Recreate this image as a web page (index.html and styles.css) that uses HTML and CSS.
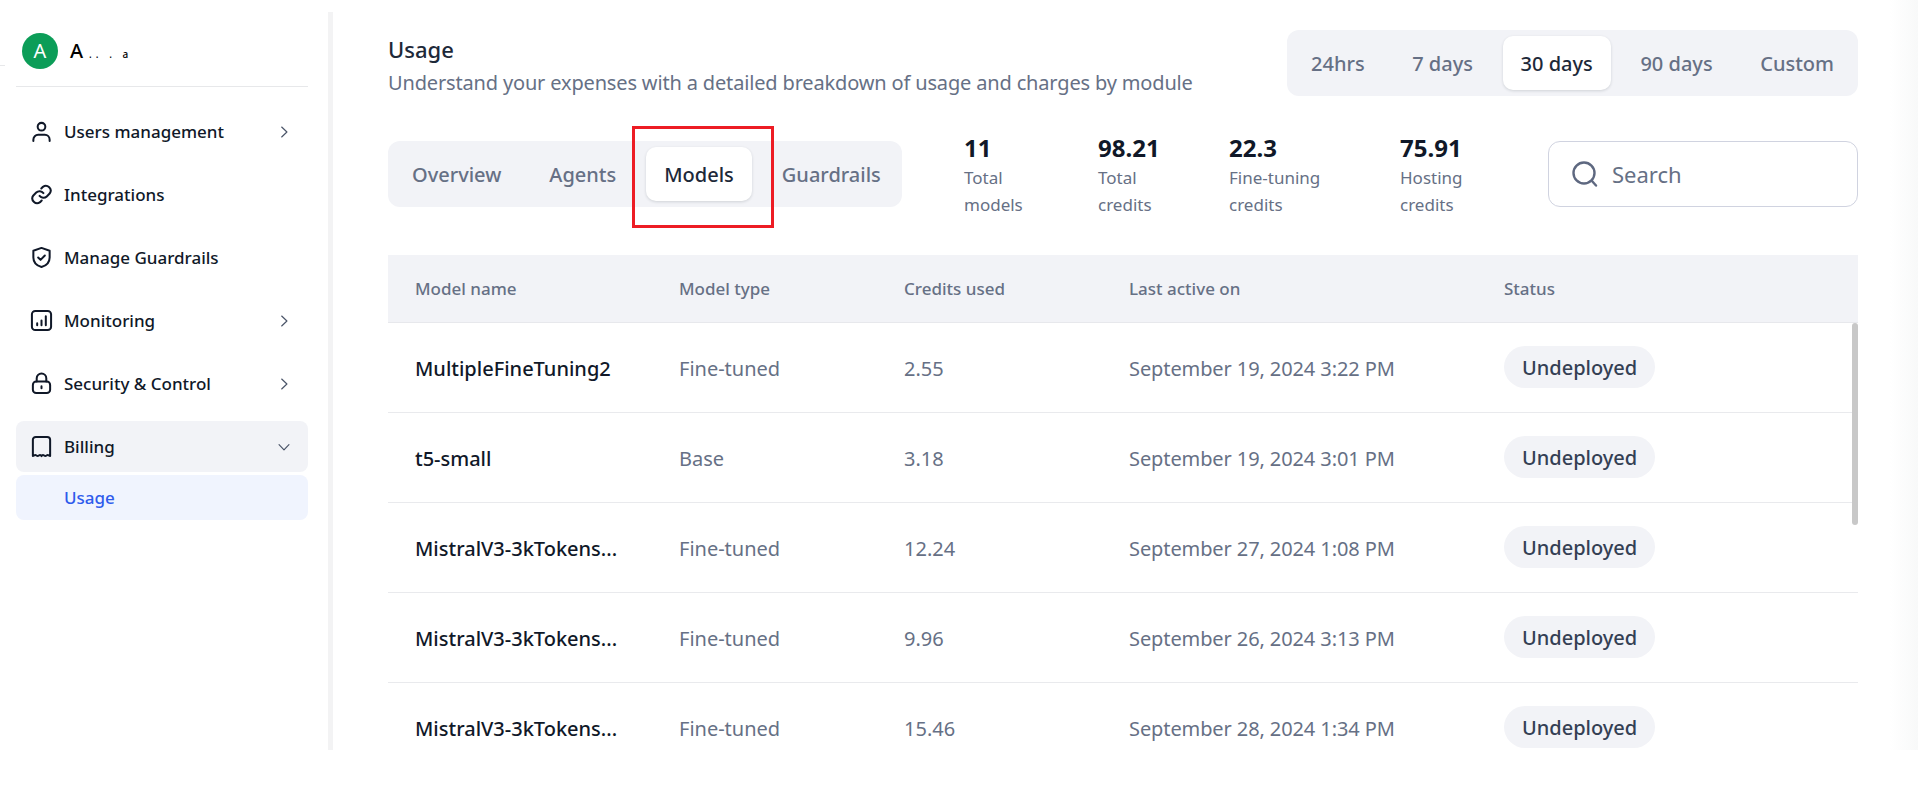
FILE: index.html
```html
<!DOCTYPE html>
<html>
<head>
    <meta charset="utf-8">
    <title>Usage</title>
    <link rel="stylesheet" href="styles.css">
</head>
<body>

<div class="app">

    <div class="sidebar">
        <div class="account">
            <span class="avatar">A</span>
            <span class="account-name">A<span class="account-rest">.. . a</span></span>
        </div>

        <div class="nav">
            <div class="nav-item">
                <svg class="nav-icon" viewBox="0 0 24 24"><circle cx="12" cy="7" r="4"/><path d="M3.500 22v-1.500a5 5 0 0 1 5-5h7a5 5 0 0 1 5 5V22"/></svg>
                <span class="nav-label">Users management</span>
                <svg class="chevron" viewBox="0 0 24 24"><path d="M8 3.500 17 12l-9 8.500"/></svg>
            </div>
            <div class="nav-item">
                <svg class="nav-icon" viewBox="0 0 24 24"><path d="M10 13.500a5 5 0 0 0 7.500.5l3-3a5 5 0 0 0-7-7l-1.700 1.700"/><path d="M14 10.500a5 5 0 0 0-7.500-.5l-3 3a5 5 0 0 0 7 7l1.700-1.700"/></svg>
                <span class="nav-label">Integrations</span>
            </div>
            <div class="nav-item">
                <svg class="nav-icon" viewBox="0 0 24 24"><path d="M12 2 3.500 5v7c0 5 3.500 8.500 8.500 10 5-1.500 8.500-5 8.500-10V5z"/><path d="m8.500 12 2.500 2.500 4.500-4.500"/></svg>
                <span class="nav-label">Manage Guardrails</span>
            </div>
            <div class="nav-item">
                <svg class="nav-icon" viewBox="0 0 24 24"><rect x="2" y="2" width="20" height="20" rx="3.500"/><path d="M7.500 17v-2M12 17v-5M16.500 17V7.500"/></svg>
                <span class="nav-label">Monitoring</span>
                <svg class="chevron" viewBox="0 0 24 24"><path d="M8 3.500 17 12l-9 8.500"/></svg>
            </div>
            <div class="nav-item">
                <svg class="nav-icon" viewBox="0 0 24 24"><rect x="3" y="10" width="18" height="12" rx="3.500"/><path d="M7 10V6.500a5 5 0 0 1 10 0V10M12 15v2"/></svg>
                <span class="nav-label">Security &amp; Control</span>
                <svg class="chevron" viewBox="0 0 24 24"><path d="M8 3.500 17 12l-9 8.500"/></svg>
            </div>
            <div class="nav-item nav-open">
                <svg class="nav-icon" viewBox="0 0 24 24"><path d="M3 22V5a3 3 0 0 1 3-3h12a3 3 0 0 1 3 3v17c-1 0-1.500-1.200-2.500-1.200S17 22 16 22s-1.500-1.200-2.500-1.200S12 22 12 22s-.5-1.200-1.500-1.200S9 22 8 22s-1.500-1.200-2.500-1.200S4 22 3 22z"/></svg>
                <span class="nav-label">Billing</span>
                <svg class="chevron" viewBox="0 0 24 24"><path d="M3.500 8 12 17l8.500-9"/></svg>
            </div>
            <div class="nav-sub">Usage</div>
        </div>
    </div>

    <div class="main">

        <div class="top-row">
            <div>
                <h1>Usage</h1>
                <p class="subtitle">Understand your expenses with a detailed breakdown of usage and charges by module</p>
            </div>
            <div class="tabs range-tabs">
                <span class="tab">24hrs</span>
                <span class="tab">7 days</span>
                <span class="tab tab-active">30 days</span>
                <span class="tab">90 days</span>
                <span class="tab">Custom</span>
            </div>
        </div>

        <div class="tool-row">
            <div class="tabs module-tabs">
                <span class="tab">Overview</span>
                <span class="tab">Agents</span>
                <span class="tab tab-active">Models</span>
                <span class="tab">Guardrails</span>
                <span class="red-box"></span>
            </div>

            <div class="stats">
                <div class="stat stat-models"><b>11</b><span>Total<br>models</span></div>
                <div class="stat stat-credits"><b>98.21</b><span>Total<br>credits</span></div>
                <div class="stat stat-tuning"><b>22.3</b><span>Fine-tuning<br>credits</span></div>
                <div class="stat"><b>75.91</b><span>Hosting<br>credits</span></div>
            </div>

            <div class="search">
                <svg class="search-icon" viewBox="0 0 26 26"><circle cx="12" cy="12" r="10.500"/><path d="m20 20 4 4.500"/></svg>
                <span>Search</span>
            </div>
        </div>

        <div class="table-box">
            <table class="models">
                <thead>
                    <tr>
                        <th class="col-name">Model name</th>
                        <th class="col-type">Model type</th>
                        <th class="col-credits">Credits used</th>
                        <th class="col-active">Last active on</th>
                        <th>Status</th>
                    </tr>
                </thead>
                <tbody>
                    <tr>
                        <td class="name">MultipleFineTuning2</td>
                        <td>Fine-tuned</td>
                        <td>2.55</td>
                        <td class="when">September 19, 2024 3:22 PM</td>
                        <td><span class="badge">Undeployed</span></td>
                    </tr>
                    <tr>
                        <td class="name">t5-small</td>
                        <td>Base</td>
                        <td>3.18</td>
                        <td class="when">September 19, 2024 3:01 PM</td>
                        <td><span class="badge">Undeployed</span></td>
                    </tr>
                    <tr>
                        <td class="name">MistralV3-3kTokens...</td>
                        <td>Fine-tuned</td>
                        <td>12.24</td>
                        <td class="when">September 27, 2024 1:08 PM</td>
                        <td><span class="badge">Undeployed</span></td>
                    </tr>
                    <tr>
                        <td class="name">MistralV3-3kTokens...</td>
                        <td>Fine-tuned</td>
                        <td>9.96</td>
                        <td class="when">September 26, 2024 3:13 PM</td>
                        <td><span class="badge">Undeployed</span></td>
                    </tr>
                    <tr>
                        <td class="name">MistralV3-3kTokens...</td>
                        <td>Fine-tuned</td>
                        <td>15.46</td>
                        <td class="when">September 28, 2024 1:34 PM</td>
                        <td><span class="badge">Undeployed</span></td>
                    </tr>
                </tbody>
            </table>
            <div class="scroll-thumb"></div>
        </div>

    </div>

    <div class="edge"></div>

</div>

</body>
</html>
```

FILE: styles.css
```css
* {
    box-sizing: border-box;
}

html, body {
    margin: 0;
    height: 798px;
    overflow: hidden;
    background: #fff;
}

body {
    font-family: "Noto Sans", "Open Sans", sans-serif;
    color: #101828;
}

.app {
    position: relative;
    display: flex;
    height: 750px;
    overflow: hidden;
}

/* sidebar */

.sidebar {
    width: 333px;
    flex: none;
    margin-top: 12px;
    padding: 0 20px 0 16px;
    border-right: 5px solid #f3f3f4;
}

.account {
    display: flex;
    align-items: center;
    gap: 12px;
    height: 75px;
    padding: 3px 0 0 6px;
    border-bottom: 1px solid #e7e8ea;
}

/* leftover bit of a line at the window edge */
.account::before {
    content: "";
    position: absolute;
    left: 0;
    top: 65px;
    width: 5px;
    height: 1px;
    background: #e7e8ea;
}

.avatar {
    width: 36px;
    height: 36px;
    border-radius: 50%;
    background: #0c9d58;
    color: #fff;
    font-size: 20px;
    line-height: 36px;
    text-align: center;
}

.account-name {
    font-size: 20px;
    font-weight: 500;
    color: #000;
}

.account-rest {
    font-size: 10px;
    letter-spacing: 4px;
    margin-left: 6px;
}

.nav {
    padding-top: 13px;
}

.nav-item {
    display: flex;
    align-items: center;
    height: 63px;
    padding: 0 16px 0 14px;
}

.nav-open {
    height: 51px;
    margin-top: 6px;
    background: #f2f3f7;
    border-radius: 8px;
}

.nav-icon {
    width: 23px;
    height: 23px;
    flex: none;
    fill: none;
    stroke: #101828;
    stroke-width: 2.1;
    stroke-linecap: round;
    stroke-linejoin: round;
}

.nav-label {
    flex: 1;
    margin-left: 11px;
    font-size: 17px;
    font-weight: 500;
    color: #101828;
}

.chevron {
    width: 14px;
    height: 14px;
    flex: none;
    margin-right: 1px;
    fill: none;
    stroke: #4a5468;
    stroke-width: 2;
    stroke-linecap: round;
    stroke-linejoin: round;
}

.nav-sub {
    height: 45px;
    margin-top: 3px;
    padding-left: 48px;
    background: #f0f4fe;
    border-radius: 8px;
    font-size: 17px;
    font-weight: 500;
    line-height: 45px;
    color: #2e5bec;
}

/* main column */

.main {
    width: 1470px;
    flex: none;
    margin-left: 55px;
}

.top-row {
    display: flex;
    justify-content: space-between;
    align-items: flex-start;
    height: 141px;
    padding-top: 30px;
}

h1 {
    margin: 4px 0 0;
    font-size: 22px;
    font-weight: 500;
    line-height: 30px;
    color: #1d2939;
}

.subtitle {
    margin: 6px 0 0;
    font-size: 20px;
    line-height: 26px;
    letter-spacing: -0.16px;
    color: #667085;
}

.tabs {
    display: flex;
    align-items: center;
    height: 66px;
    padding: 0 6px;
    background: #f2f3f7;
    border-radius: 12px;
}

.tab {
    height: 54px;
    padding: 0 18px;
    font-size: 20px;
    font-weight: 500;
    line-height: 56px;
    color: #667085;
}

.tab-active {
    background: #fff;
    border-radius: 10px;
    box-shadow: 0 1px 3px rgba(16, 24, 40, 0.15);
    color: #1d2939;
}

.range-tabs {
    width: 571px;
    justify-content: space-between;
}

.module-tabs {
    position: relative;
    width: 514px;
    flex: none;
    gap: 12px;
}

.red-box {
    position: absolute;
    left: 244px;
    top: -15px;
    width: 142px;
    height: 102px;
    border: 3px solid #ed1c24;
}

.tool-row {
    display: flex;
    align-items: flex-start;
    height: 114px;
}

.stats {
    display: flex;
    margin: -8px 0 0 62px;
}

.stat {
    font-size: 17px;
    line-height: 27px;
    color: #667085;
}

.stat b {
    display: block;
    font-size: 24px;
    font-weight: 700;
    line-height: 30px;
    color: #101828;
    margin-bottom: 1px;
}

.stat span {
    display: block;
}

.stat-models {
    width: 134px;
}

.stat-credits {
    width: 131px;
}

.stat-tuning {
    width: 171px;
}

.search {
    display: flex;
    align-items: center;
    gap: 14px;
    width: 310px;
    height: 66px;
    margin-left: auto;
    padding-left: 23px;
    border: 1px solid #d0d3e0;
    border-radius: 12px;
    font-size: 22px;
    color: #667085;
}

.search-icon {
    width: 26px;
    height: 26px;
    fill: none;
    stroke: #5e6880;
    stroke-width: 2.400;
    stroke-linecap: round;
}

/* table */

.table-box {
    position: relative;
    height: 495px;
    overflow: hidden;
}

.models {
    width: 100%;
    border-collapse: collapse;
    table-layout: fixed;
}

.models th {
    height: 67px;
    padding: 0;
    background: #f2f3f7;
    border-bottom: 1px solid #e7e8ec;
    font-size: 17px;
    font-weight: 500;
    text-align: left;
    color: #667085;
}

.models th:first-child, .models td:first-child {
    padding-left: 27px;
}

.col-name {
    width: 291px;
}

.col-type {
    width: 225px;
}

.col-credits {
    width: 225px;
}

.col-active {
    width: 375px;
}

.models td {
    height: 90px;
    padding: 2px 0 0;
    border-bottom: 1px solid #e9eaed;
    font-size: 20px;
    color: #667085;
}

.models td.name {
    font-weight: 500;
    color: #101828;
}

.models td.when {
    letter-spacing: -0.1px;
}

.badge {
    display: inline-block;
    height: 42px;
    margin-top: -2px;
    padding: 0 18px;
    background: #f2f3f7;
    border-radius: 21px;
    font-size: 20px;
    font-weight: 500;
    line-height: 44px;
    color: #344054;
    vertical-align: middle;
}

.scroll-thumb {
    position: absolute;
    right: 0;
    top: 68px;
    width: 6px;
    height: 202px;
    background: #c8c8c8;
    border-radius: 3px;
}

.edge {
    width: 28px;
    flex: none;
    margin-left: 32px;
    background: linear-gradient(to right, #fff, #f8f9f9);
}
```
